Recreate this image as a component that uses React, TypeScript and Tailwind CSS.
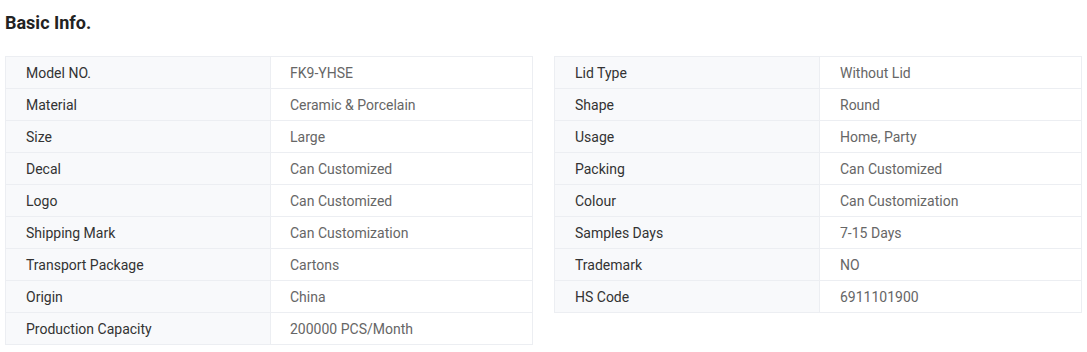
const left: [string, string][] = [
  ["Model NO.", "FK9-YHSE"],
  ["Material", "Ceramic & Porcelain"],
  ["Size", "Large"],
  ["Decal", "Can Customized"],
  ["Logo", "Can Customized"],
  ["Shipping Mark", "Can Customization"],
  ["Transport Package", "Cartons"],
  ["Origin", "China"],
  ["Production Capacity", "200000 PCS/Month"],
];

const right: [string, string][] = [
  ["Lid Type", "Without Lid"],
  ["Shape", "Round"],
  ["Usage", "Home, Party"],
  ["Packing", "Can Customized"],
  ["Colour", "Can Customization"],
  ["Samples Days", "7-15 Days"],
  ["Trademark", "NO"],
  ["HS Code", "6911101900"],
];

function InfoTable({ rows, wide }: { rows: [string, string][]; wide?: boolean }) {
  return (
    <div className="w-[530px] border-t border-l border-[#eceef2] text-[14px]">
      {rows.map(([k, v]) => (
        <div key={k} className="flex h-[32px] border-b border-[#eceef2]">
          <div className="flex w-[265px] items-center border-r border-[#eceef2] bg-[#f8f9fb] pl-[20px] pt-[2px] text-[#333]">{k}</div>
          <div className={wide ? "flex flex-1 items-center border-r border-[#eceef2] bg-white pl-[20px] pt-[2px] text-[#666]" : "flex flex-1 items-center border-r border-[#eceef2] bg-white pl-[19px] pt-[2px] text-[#666]"}>{v}</div>
        </div>
      ))}
    </div>
  );
}

export default function App() {
  return (
    <div className="w-[1087px] h-[352px] bg-white px-[5px] font-['Roboto',sans-serif]">
      <h2 className="h-[56px] pt-[11px] text-[18px] leading-[24px] font-bold text-[#222]">Basic Info.</h2>
      <div className="flex items-start gap-[21px]">
        <InfoTable rows={left} />
        <InfoTable rows={right} wide />
      </div>
    </div>
  );
}
